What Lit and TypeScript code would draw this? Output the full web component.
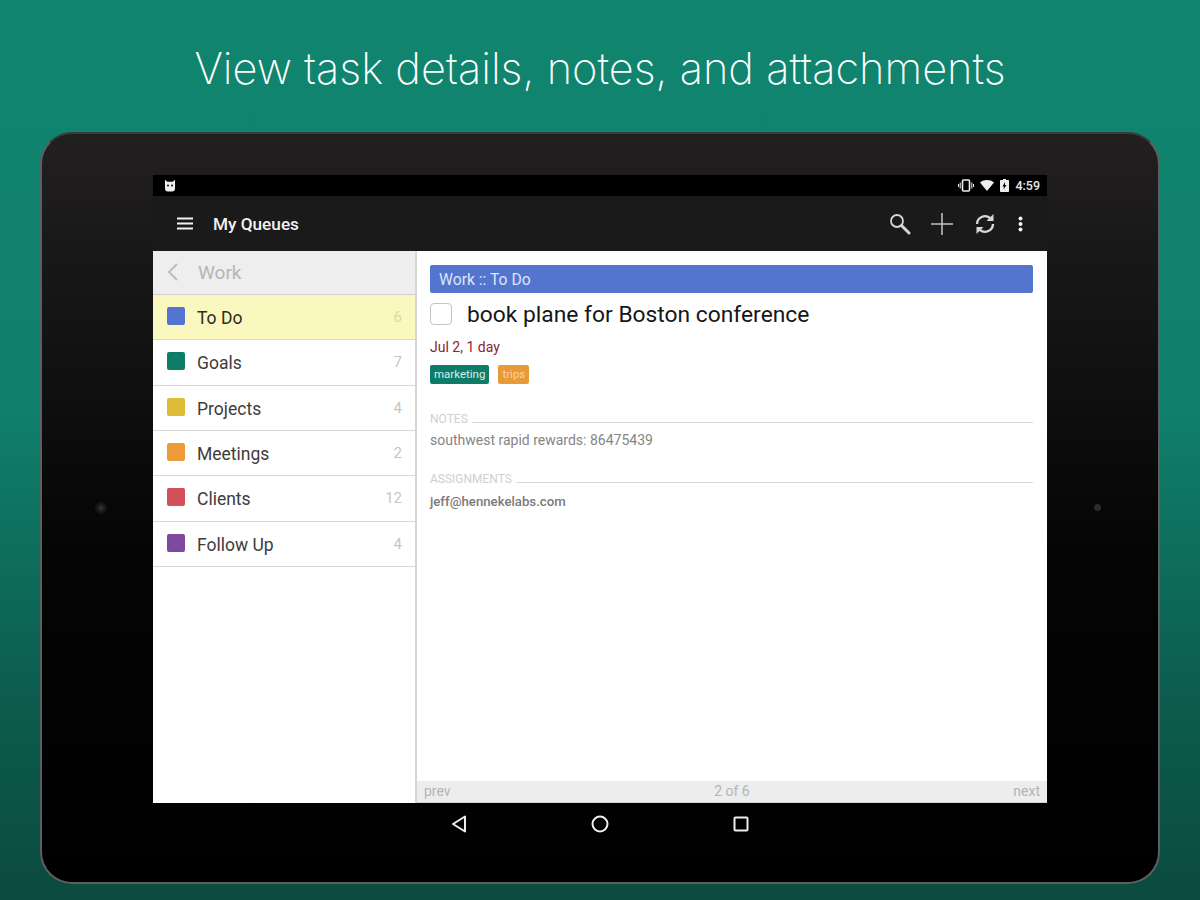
import { LitElement, html, css } from "lit";
import { customElement } from "lit/decorators.js";

const QUEUES = [
  { name: "To Do", color: "#5374cf", count: 6, active: true },
  { name: "Goals", color: "#0f7c68", count: 7 },
  { name: "Projects", color: "#e0bb37", count: 4 },
  { name: "Meetings", color: "#ee9a38", count: 2 },
  { name: "Clients", color: "#d2505a", count: 12 },
  { name: "Follow Up", color: "#7d4a9e", count: 4 },
];

@customElement("app-root")
export class AppRoot extends LitElement {
  static styles = css`
    :host {
      display: block;
      width: 1200px;
      height: 900px;
      overflow: hidden;
      font-family: Roboto, "Liberation Sans", sans-serif;
    }
    .page {
      box-sizing: border-box;
      height: 900px;
      padding: 0 40px;
      background: linear-gradient(180deg, #11856f 0%, #10806c 45%, #0c5f50 75%, #0b4a3f 100%);
    }
    h1 {
      margin: 0;
      height: 132px;
      padding-top: 38px;
      box-sizing: border-box;
      text-align: center;
      font-family: Inter, Roboto, sans-serif;
      font-weight: 200;
      font-size: 43.3px;
      line-height: 60px;
      color: #fff;
      white-space: nowrap;
    }
    .tablet {
      position: relative;
      box-sizing: border-box;
      height: 752px;
      padding: 41px 111px 0;
      border-radius: 32px;
      border: 2px solid #5c5f60;
      border-top-color: #3a3c3c;
      background: linear-gradient(180deg, #221f20 0%, #141414 25%, #050505 55%, #000 100%);
    }
    .cam {
      position: absolute;
      top: 368px;
      border-radius: 50%;
    }
    .cam.l { left: 53px; width: 12px; height: 12px; background: radial-gradient(circle, #3a3d40 0, #1a1a1b 40%, #0a0a0a 100%); }
    .cam.r { right: 57px; top: 370px; width: 7px; height: 7px; background: #2b2c2d; }
    .screen { display: flex; flex-direction: column; height: 670px; }
    .status {
      height: 21px;
      box-sizing: border-box;
      background: #000;
      display: flex;
      align-items: center;
      padding: 0 7px 0 11px;
      color: #e8e8e8;
      font-size: 12.5px;
      font-weight: 500;
    }
    .status .spacer, .bar .spacer { flex: 1; }
    .status svg { display: block; }
    .status .ic { margin-right: 6px; }
    .bar {
      height: 55px;
      box-sizing: border-box;
      background: #1a1a1a;
      display: flex;
      align-items: center;
      padding: 0 24px 0 24px;
      color: #f2f2f2;
    }
    .bar .title { margin-left: 20px; font-size: 17.2px; font-weight: 500; }
    .bar .acts { display: flex; align-items: center; gap: 20px; }
    .bar .sync { margin-left: 2px; }
    .bar .dots { margin-left: 3px; }
    .content { height: 552px; display: flex; background: #fff; }
    .side {
      width: 262px;
      flex: none;
      border-right: 2px solid #d6d6d6;
    }
    .back {
      height: 44px;
      box-sizing: border-box;
      background: #eeeeee;
      border-bottom: 1px solid #cfcfcf;
      display: flex;
      align-items: center;
      padding: 0 0 1px 14px;
      gap: 20px;
      color: #b5b5b5;
      font-size: 19px;
    }
    .row {
      height: 45.33px;
      box-sizing: border-box;
      border-bottom: 1px solid #d8d8d8;
      display: flex;
      align-items: center;
      padding: 2px 13px 0 14px;
      font-size: 17.5px;
      color: #3c3c3c;
    }
    .row.active { background: #faf8bf; color: #2c2c20; }
    .sw { width: 18px; height: 18px; border-radius: 2px; margin-right: 12px; margin-top: -4px; }
    .row .n { flex: 1; }
    .row .c { font-size: 15px; color: #c6c6c6; margin-top: -2px; }
    .row.active .c { color: #dcdaa8; }
    .detail { flex: 1; display: flex; flex-direction: column; min-width: 0; }
    .body { flex: 1; padding: 14px 14px 0 13px; }
    .banner {
      height: 28px;
      background: #5374cf;
      border-radius: 2px;
      color: #dfe6f7;
      font-size: 15.7px;
      line-height: 29px;
      padding-left: 9px;
    }
    .task { display: flex; align-items: center; margin-top: 6px; height: 30px; }
    .check {
      width: 20px;
      height: 20px;
      border: 1px solid #c4c4c4;
      border-radius: 4px;
      margin-right: 15px;
      flex: none;
    }
    .task span { font-size: 22.8px; color: #161616; }
    .due { margin-top: 9px; font-size: 14px; line-height: 18px; color: #8f2230; }
    .tags { display: flex; gap: 9px; margin-top: 9px; }
    .tag {
      height: 19px;
      padding: 0 4px;
      border-radius: 2px;
      font-size: 11.5px;
      line-height: 19px;
      color: #d5efe8;
    }
    .tag.g { background: #0f7c68; }
    .tag.o { background: #e99a38; color: #f9d49c; }
    .sec { display: flex; align-items: flex-end; gap: 4px; font-size: 12px; line-height: 14px; color: #cfcfcf; }
    .sec::after { content: ""; flex: 1; height: 1px; background: #d9d9d9; margin-bottom: 3px; }
    .sec.notes { margin-top: 28px; }
    .sec.asg { margin-top: 23px; }
    .note { margin-top: 5px; font-size: 14px; line-height: 18px; color: #858585; }
    .mail { margin-top: 7px; font-size: 13.2px; font-weight: 500; line-height: 18px; color: #7a7a7a; }
    .foot {
      height: 22px;
      background: #ededed;
      display: flex;
      justify-content: space-between;
      align-items: center;
      padding: 0 7px 1px;
      color: #b4b4b4;
      font-size: 14px;
      border-bottom: 1px solid #d0d0d0;
      box-sizing: border-box;
    }
    .nav {
      height: 42px;
      display: flex;
      align-items: center;
      justify-content: center;
      gap: 120px;
    }
    .nav svg { display: block; }
  `;

  render() {
    return html`
      <div class="page">
        <h1>View task details, notes, and attachments</h1>
        <div class="tablet">
          <div class="cam l"></div>
          <div class="cam r"></div>
          <div class="screen">
            <div class="status">
              <svg width="12" height="13" viewBox="0 0 12 13">
                <path fill="#eee" d="M1.500 1l1.700 1.700h5.600L10.500 1l.5.4v8.100A3 3 0 0 1 8 12.500H4a3 3 0 0 1-3-3V1.400z"/>
                <circle cx="4" cy="6.500" r="1" fill="#000"/><circle cx="8" cy="6.500" r="1" fill="#000"/>
              </svg>
              <div class="spacer"></div>
              <svg class="ic" width="16" height="13" viewBox="0 0 16 13" fill="none" stroke="#eee">
                <rect x="4.500" y="1" width="7" height="11" rx="1" stroke-width="1.600"/>
                <path d="M2.200 3.500v6M0.500 5v3M13.800 3.500v6M15.500 5v3" stroke-width="1"/>
              </svg>
              <svg class="ic" width="14" height="11" viewBox="0 0 14 11">
                <path fill="#eee" d="M0 2.500C3.800-.8 10.200-.8 14 2.500L7 11z"/>
              </svg>
              <svg class="ic" width="9" height="13" viewBox="0 0 9 13">
                <path fill="#eee" fill-rule="evenodd" d="M3 0h3v1h2.200a.8.8 0 0 1 .8.800v10.400a.8.8 0 0 1-.8.800H.8a.8.8 0 0 1-.8-.8V1.800a.8.8 0 0 1 .8-.8H3zM5 3L2.500 7.500H4L3.500 10.500 6.500 6H5z"/>
              </svg>
              <span>4:59</span>
            </div>
            <div class="bar">
              <svg width="16" height="13" viewBox="0 0 16 13" stroke="#f2f2f2" stroke-width="2">
                <path d="M0 1.500h16M0 6.500h16M0 11.500h16"/>
              </svg>
              <span class="title">My Queues</span>
              <div class="spacer"></div>
              <div class="acts">
                <svg width="22" height="24" viewBox="0 0 22 24" fill="none" stroke="#d5d5d5">
                  <circle cx="8" cy="9" r="6" stroke-width="1.800"/>
                  <path d="M12.500 13.500L20 21" stroke-width="3" stroke-linecap="round"/>
                </svg>
                <svg width="22" height="22" viewBox="0 0 22 22" stroke="#c4c4c4" stroke-width="1.500">
                  <path d="M11 0v22M0 11h22"/>
                </svg>
                <svg class="sync" width="20" height="22" viewBox="0 0 20 22" fill="none" stroke="#d8d8d8" stroke-width="2.400">
                  <path d="M2 11a8 8 0 0 1 13-6"/>
                  <path d="M18 11a8 8 0 0 1-13 6"/>
                  <path d="M18.500 1v7h-7z" fill="#d8d8d8" stroke="none"/>
                  <path d="M1.500 21v-7h7z" fill="#d8d8d8" stroke="none"/>
                </svg>
                <svg class="dots" width="5" height="16" viewBox="0 0 5 16" fill="#f0f0f0">
                  <circle cx="2.500" cy="2.500" r="2"/><circle cx="2.500" cy="8" r="2"/><circle cx="2.500" cy="13.500" r="2"/>
                </svg>
              </div>
            </div>
            <div class="content">
              <div class="side">
                <div class="back">
                  <svg width="11" height="18" viewBox="0 0 11 18" fill="none" stroke="#bdbdbd" stroke-width="2">
                    <path d="M10 1L2 9l8 8"/>
                  </svg>
                  <span>Work</span>
                </div>
                ${QUEUES.map(
                  (q) => html`
                    <div class="row ${q.active ? "active" : ""}">
                      <div class="sw" style="background:${q.color}"></div>
                      <span class="n">${q.name}</span>
                      <span class="c">${q.count}</span>
                    </div>
                  `
                )}
              </div>
              <div class="detail">
                <div class="body">
                  <div class="banner">Work :: To Do</div>
                  <div class="task"><div class="check"></div><span>book plane for Boston conference</span></div>
                  <div class="due">Jul 2, 1 day</div>
                  <div class="tags"><div class="tag g">marketing</div><div class="tag o">trips</div></div>
                  <div class="sec notes">NOTES</div>
                  <div class="note">southwest rapid rewards: 86475439</div>
                  <div class="sec asg">ASSIGNMENTS</div>
                  <div class="mail">jeff@hennekelabs.com</div>
                </div>
                <div class="foot"><span>prev</span><span>2 of 6</span><span>next</span></div>
              </div>
            </div>
            <div class="nav">
              <svg width="22" height="22" viewBox="0 0 22 22" fill="none" stroke="#eee" stroke-width="2">
                <path d="M18 3.500v15L6 11z" stroke-linejoin="round"/>
              </svg>
              <svg width="22" height="22" viewBox="0 0 22 22" fill="none" stroke="#eee" stroke-width="2">
                <circle cx="11" cy="11" r="7.500"/>
              </svg>
              <svg width="22" height="22" viewBox="0 0 22 22" fill="none" stroke="#eee" stroke-width="2">
                <rect x="3.500" y="4.500" width="13" height="13" rx="1"/>
              </svg>
            </div>
          </div>
        </div>
      </div>
    `;
  }
}
